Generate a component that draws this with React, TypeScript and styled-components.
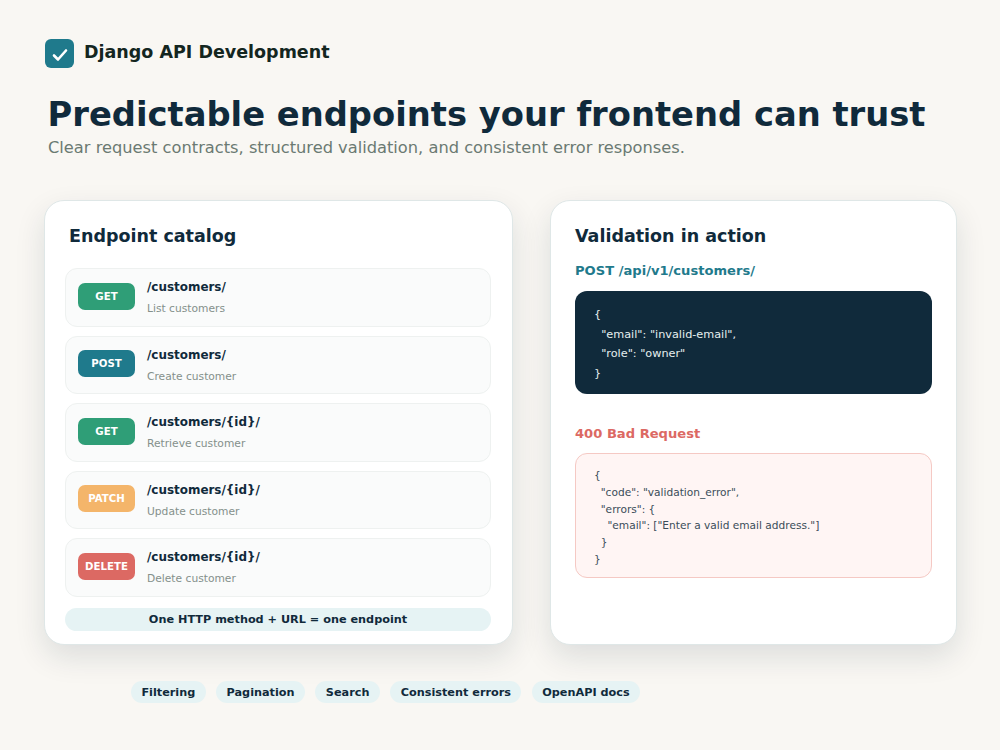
import React from "react";
import styled, { createGlobalStyle } from "styled-components";

const Global = createGlobalStyle`
  html, body {
    margin: 0;
    padding: 0;
    background: #f9f7f3;
  }
  body {
    font-family: "DejaVu Sans", sans-serif;
  }
`;

const Page = styled.div`
  width: 1000px;
  height: 750px;
  box-sizing: border-box;
  padding: 38px 43px 0 44px;
  overflow: hidden;
`;

const Brand = styled.div`
  display: flex;
  align-items: center;
  gap: 10px;
  height: 30px;
  margin-left: 1px;
`;

const Logo = styled.div`
  width: 29px;
  height: 29px;
  border-radius: 6px;
  background: #1f7a8c;
  display: flex;
  align-items: center;
  justify-content: center;
`;

const BrandName = styled.div`
  font-size: 17.5px;
  font-weight: 700;
  color: #14261f;
  margin-top: -3px;
`;

const Heading = styled.h1`
  margin: 26px 0 0 3.5px;
  font-size: 33.75px;
  line-height: 42px;
  font-weight: 700;
  color: #102a3b;
  white-space: nowrap;
`;

const Subtitle = styled.p`
  margin: 1px 0 0 4px;
  font-size: 16.25px;
  line-height: 22px;
  color: #6b7a72;
`;

const Columns = styled.div`
  display: grid;
  grid-template-columns: 469px 407px;
  gap: 37px;
  margin-top: 41px;
`;

const Card = styled.section`
  height: 445px;
  box-sizing: border-box;
  background: #fff;
  border: 1px solid #dfe7e7;
  border-radius: 20px;
  box-shadow: 0 12px 30px rgba(16, 42, 59, 0.12);
  padding: 23px 21px 12px 20px;
  display: flex;
  flex-direction: column;
`;

const CardTitle = styled.h2`
  margin: 0 0 0 4px;
  font-size: 17.5px;
  line-height: 24px;
  font-weight: 700;
  color: #102a3b;
`;

const Rows = styled.div`
  display: flex;
  flex-direction: column;
  gap: 9px;
  margin-top: 20px;
`;

const Row = styled.div`
  height: 58.5px;
  box-sizing: border-box;
  display: flex;
  align-items: center;
  gap: 12px;
  padding: 0 12px;
  background: #fafbfb;
  border: 1px solid #eef1f0;
  border-radius: 12px;
`;

const methodColors: Record<string, string> = {
  GET: "#2f9e77",
  POST: "#1f7a8c",
  PATCH: "#f4b56a",
  DELETE: "#dc6963",
};

const Badge = styled.div<{ $method: string }>`
  width: 57px;
  height: 27px;
  flex: none;
  margin-top: -2px;
  border-radius: 7px;
  background: ${({ $method }) => methodColors[$method]};
  color: #fff;
  font-size: 10.2px;
  font-weight: 700;
  display: flex;
  align-items: center;
  justify-content: center;
`;

const RowText = styled.div`
  display: flex;
  flex-direction: column;
  gap: 7px;
  padding-top: 2px;
`;

const Path = styled.div`
  font-size: 11.95px;
  line-height: 15px;
  font-weight: 700;
  color: #102a3b;
`;

const Description = styled.div`
  font-size: 10.7px;
  line-height: 14px;
  color: #84908b;
`;

const Note = styled.div`
  margin-top: 11px;
  height: 23px;
  border-radius: 12px;
  background: #e6f3f4;
  color: #102a3b;
  font-size: 11.25px;
  font-weight: 700;
  display: flex;
  align-items: center;
  justify-content: center;
`;

const RightCard = styled(Card)`
  padding-left: 24px;
  padding-right: 24px;
`;

const RightTitle = styled(CardTitle)`
  margin-left: 0;
`;

const Label = styled.div<{ $color: string; $top: number }>`
  margin-top: ${({ $top }) => $top}px;
  font-size: 13.1px;
  line-height: 17px;
  font-weight: 700;
  color: ${({ $color }) => $color};
`;

const RequestCode = styled.pre`
  margin: 12px 0 0;
  height: 103px;
  box-sizing: border-box;
  padding: 14px 19px;
  border-radius: 12px;
  background: #102a3b;
  color: #e6efef;
  font-family: "DejaVu Sans", sans-serif;
  font-size: 11.25px;
  line-height: 19.5px;
`;

const ErrorCode = styled.pre`
  margin: 11.5px 0 0;
  height: 125px;
  box-sizing: border-box;
  padding: 13px 18px;
  border-radius: 12px;
  background: #fff5f4;
  border: 1px solid #f5c9c4;
  color: #3b4d59;
  font-family: "DejaVu Sans", sans-serif;
  font-size: 10.6px;
  line-height: 16.8px;
`;

const Chips = styled.div`
  display: flex;
  gap: 10.5px;
  margin: 36px 0 0 87px;
`;

const Chip = styled.span`
  height: 22px;
  padding: 0 10.4px;
  border-radius: 11px;
  background: #e6f3f4;
  color: #102a3b;
  font-size: 11.25px;
  font-weight: 700;
  display: flex;
  align-items: center;
`;

const endpoints = [
  { method: "GET", path: "/customers/", description: "List customers" },
  { method: "POST", path: "/customers/", description: "Create customer" },
  { method: "GET", path: "/customers/{id}/", description: "Retrieve customer" },
  { method: "PATCH", path: "/customers/{id}/", description: "Update customer" },
  { method: "DELETE", path: "/customers/{id}/", description: "Delete customer" },
];

const features = ["Filtering", "Pagination", "Search", "Consistent errors", "OpenAPI docs"];

const requestBody = `{
  "email": "invalid-email",
  "role": "owner"
}`;

const errorBody = `{
  "code": "validation_error",
  "errors": {
    "email": ["Enter a valid email address."]
  }
}`;

export default function App() {
  return (
    <Page>
      <Global />
      <Brand>
        <Logo>
          <svg width="19" height="19" viewBox="0 0 19 19" fill="none" aria-hidden="true">
            <path d="M4 11.5 L8 15.5 L16 6.5" stroke="#fff" strokeWidth="2.6" strokeLinecap="round" strokeLinejoin="round" />
          </svg>
        </Logo>
        <BrandName>Django API Development</BrandName>
      </Brand>
      <Heading>Predictable endpoints your frontend can trust</Heading>
      <Subtitle>Clear request contracts, structured validation, and consistent error responses.</Subtitle>
      <Columns>
        <Card>
          <CardTitle>Endpoint catalog</CardTitle>
          <Rows>
            {endpoints.map((e) => (
              <Row key={e.description}>
                <Badge $method={e.method}>{e.method}</Badge>
                <RowText>
                  <Path>{e.path}</Path>
                  <Description>{e.description}</Description>
                </RowText>
              </Row>
            ))}
          </Rows>
          <Note>One HTTP method + URL = one endpoint</Note>
        </Card>
        <RightCard>
          <RightTitle>Validation in action</RightTitle>
          <Label $color="#1f7a8c" $top={14}>POST /api/v1/customers/</Label>
          <RequestCode>{requestBody}</RequestCode>
          <Label $color="#dc6963" $top={30.5}>400 Bad Request</Label>
          <ErrorCode>{errorBody}</ErrorCode>
        </RightCard>
      </Columns>
      <Chips>
        {features.map((f) => (
          <Chip key={f}>{f}</Chip>
        ))}
      </Chips>
    </Page>
  );
}
